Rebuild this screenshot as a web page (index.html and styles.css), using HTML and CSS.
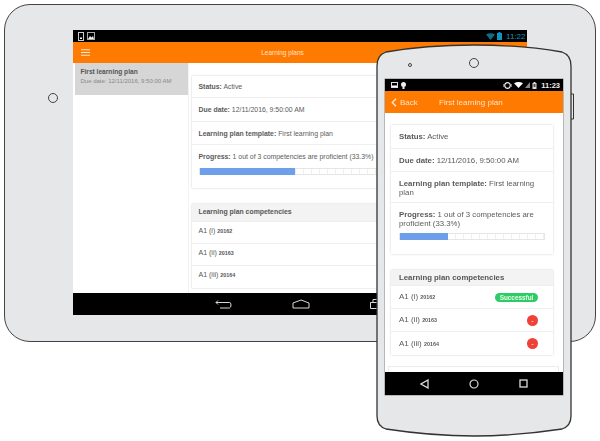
FILE: index.html
```html
<!DOCTYPE html>
<html lang="en">
<head>
<meta charset="utf-8">
<title>Learning plans</title>
<link rel="stylesheet" href="styles.css">
</head>
<body>
<main class="stage">
  <section class="tablet">
    <div class="home-ring"></div>
    <div class="t-screen">
      <div class="t-status">
        <div class="icons">
          <svg width="6" height="9" viewBox="0 0 6 9"><rect x=".5" y=".5" width="5" height="8" fill="none" stroke="#ccc"/><rect x="2" y="5.500" width="2" height="1.500" fill="#fff"/></svg>
          <svg width="8" height="8" viewBox="0 0 8 8"><rect x=".5" y=".5" width="7" height="7" fill="none" stroke="#aaa"/><path d="M1 7l2-3 1.500 1.500L6 4l1 3z" fill="#eee"/></svg>
        </div>
        <div class="icons t-right">
          <svg width="9" height="7" viewBox="0 0 9 7"><path d="M0 1.500Q4.500-1 9 1.500L4.500 7z" fill="#0a6f86"/></svg>
          <svg width="5" height="8" viewBox="0 0 5 8"><rect y="1" width="5" height="7" fill="#1394bc"/><rect x="1.500" width="2" height="1" fill="#1394bc"/></svg>
          <span class="t-clock">11:22</span>
        </div>
      </div>
      <header class="t-bar">
        <svg class="burger" width="9" height="7" viewBox="0 0 9 7"><path d="M0 .750h9M0 3.500h9M0 6.250h9" stroke="#ffe7cf" stroke-width="1"/></svg>
        <span class="t-title">Learning plans</span>
      </header>
      <div class="t-body">
        <aside class="t-side">
          <div class="t-item">
            <strong>First learning plan</strong>
            <span>Due date: 12/11/2016, 9:50:00 AM</span>
          </div>
        </aside>
        <div class="t-main">
          <div class="card t-card">
            <div class="row t-row-a"><b>Status:</b> Active</div>
            <div class="row t-row-b"><b>Due date:</b> 12/11/2016, 9:50:00 AM</div>
            <div class="row t-row-c"><b>Learning plan template:</b> First learning plan</div>
            <div class="row t-row-p">
              <div><b>Progress:</b> 1 out of 3 competencies are proficient (33.3%)</div>
              <div class="bar t-progress"><div class="fill" style="width:31%"></div></div>
            </div>
          </div>
          <div class="card t-card t-comp">
            <div class="card-head t-head">Learning plan competencies</div>
            <div class="row comp t-comp-row">A1 (i) <small>20162</small></div>
            <div class="row comp t-comp-row">A1 (ii) <small>20163</small></div>
            <div class="row comp t-comp-row">A1 (iii) <small>20164</small></div>
          </div>
        </div>
      </div>
      <nav class="t-nav">
        <svg width="17" height="11" viewBox="0 0 17 11"><path d="M3 1.500L1 3.500l2 2M1 3.500h13.500q1.500 0 1.500 2.500t-1.500 3H5" fill="none" stroke="#d8d8d8"/></svg>
        <svg width="18" height="10" viewBox="0 0 18 10"><path d="M1 4L9 1l8 3v5H1z" fill="none" stroke="#d8d8d8"/></svg>
        <svg width="14" height="10" viewBox="0 0 14 10"><path d="M.500 3.500h10v6H.500zM3 3.500V.500h10.500v6h-3" fill="none" stroke="#d8d8d8"/></svg>
      </nav>
    </div>
  </section>

  <section class="phone">
    <svg class="phone-body" width="199" height="393" viewBox="0 0 199 393">
      <path d="M195 50h2.500v25H195" fill="#e6e7e8" stroke="#333"/>
      <path d="M1 22Q1 11 10 8Q50 1 98 1T186 8Q195 11 195 22V372Q195 382 186 385Q140 392 98 392T10 385Q1 382 1 372Z" fill="#e6e7e8" stroke="#333" stroke-width="1.300"/>
    </svg>
    <div class="p-sensors">
      <i class="p-dot"></i>
      <i class="p-cam"></i>
    </div>
    <div class="p-screen">
      <div class="p-status">
        <div class="icons">
          <svg width="7" height="6" viewBox="0 0 7 6"><rect x=".5" y=".5" width="6" height="5" fill="none" stroke="#ddd"/><rect x="1" y="3.500" width="5" height="1.500" fill="#fff"/></svg>
          <svg width="5" height="7" viewBox="0 0 5 7"><circle cx="2.500" cy="2.500" r="2.500" fill="#eee"/><rect x="1.500" y="4.500" width="2" height="2.500" fill="#eee"/></svg>
        </div>
        <div class="icons p-right">
          <svg width="9" height="7" viewBox="0 0 9 7"><circle cx="4.500" cy="3.500" r="2.800" fill="none" stroke="#eee" stroke-width="1.200"/><path d="M0 2v3M9 2v3" stroke="#eee"/></svg>
          <svg width="9" height="6" viewBox="0 0 9 6"><path d="M0 1.200Q4.500-1 9 1.200L4.500 6z" fill="#fff"/></svg>
          <svg width="5" height="6" viewBox="0 0 5 6"><path d="M5 0v6H0z" fill="#888"/></svg>
          <svg width="5" height="7" viewBox="0 0 5 7"><rect x=".5" y="1" width="4" height="6" fill="#ddd"/><rect x="1.500" y="0" width="2" height="1" fill="#ddd"/><rect x="1.500" y="2" width="2" height="3" fill="#555"/></svg>
          <span class="p-clock">11:23</span>
        </div>
      </div>
      <header class="p-bar">
        <span class="p-back">
          <svg width="6" height="9" viewBox="0 0 6 9"><path d="M5 .8L1.300 4.500 5 8.200" fill="none" stroke="#ffe3c8" stroke-width="1.500"/></svg>
          Back
        </span>
        <span class="p-title">First learning plan</span>
      </header>
      <div class="p-body">
        <div class="card p-card">
          <div class="row p-row-a"><b>Status:</b> Active</div>
          <div class="row p-row-b"><b>Due date:</b> 12/11/2016, 9:50:00 AM</div>
          <div class="row p-row-c"><b>Learning plan template:</b> First learning plan</div>
          <div class="row p-row-p">
            <div><b>Progress:</b> 1 out of 3 competencies are proficient (33.3%)</div>
            <div class="bar p-progress"><div class="fill" style="width:33%"></div></div>
          </div>
        </div>
        <div class="card p-card p-comp">
          <div class="card-head p-head">Learning plan competencies</div>
          <div class="row comp p-comp-row"><span>A1 (i) <small>20162</small></span><em class="pill">Successful</em></div>
          <div class="row comp p-comp-row"><span>A1 (ii) <small>20163</small></span><em class="dot">-</em></div>
          <div class="row comp p-comp-row"><span>A1 (iii) <small>20164</small></span><em class="dot">-</em></div>
        </div>
        <div class="p-peek"></div>
      </div>
      <nav class="p-nav">
        <svg width="9" height="10" viewBox="0 0 9 10"><path d="M8 1v8L1 5z" fill="none" stroke="#ddd" stroke-width="1.300"/></svg>
        <svg width="10" height="10" viewBox="0 0 10 10"><circle cx="5" cy="5" r="4" fill="none" stroke="#ddd" stroke-width="1.200"/></svg>
        <svg width="9" height="9" viewBox="0 0 9 9"><rect x="1" y="1" width="7" height="7" fill="none" stroke="#ddd" stroke-width="1.300"/></svg>
      </nav>
    </div>
  </section>
</main>
</body>
</html>
```
FILE: styles.css
```css
* { box-sizing: border-box; }
html, body { margin: 0; background: #fff; }
body { font-family: "Liberation Sans", Arial, sans-serif; color: #5a5a5a; overflow: hidden; }
.stage { position: relative; width: 600px; height: 441px; overflow: hidden; filter: blur(.45px); }
svg { display: block; }
b { font-weight: 700; }
em { font-style: normal; }

/* devices sit on a free canvas */
.tablet {
  position: absolute; left: 4px; top: 4px; width: 592px; height: 338px;
  background: #e6e7e8; border: 1.500px solid #444; border-radius: 26px;
  padding: 25px 68px 25px 67.500px;
  display: flex; align-items: flex-start;
}
.home-ring {
  position: absolute; left: 42.500px; top: 88px; width: 10px; height: 10px;
  border: 1px solid #444; border-radius: 50%;
}
.t-screen { width: 454px; height: 285px; display: flex; flex-direction: column; background: #fff; }
.t-status { height: 12px; background: #000; display: flex; justify-content: space-between; align-items: center; padding: 0 1px 0 5px; }
.icons { display: flex; align-items: center; gap: 3px; }
.t-right { gap: 2px; }
.t-clock { font-size: 8px; color: #1394bc; margin-left: 2px; }
.t-bar { height: 21px; background: #ff7a00; position: relative; display: flex; align-items: center; justify-content: center; color: #ffe3c8; font-size: 6.500px; padding-right: 34px; }
.burger { position: absolute; left: 8px; top: 7px; }
.t-body { flex: 1; display: flex; min-height: 0; overflow: hidden; }
.t-side { width: 116px; padding-left: 2px; border-right: 1px solid #f2f2f2; flex: none; }
.t-item { height: 32px; background: #d6d6d6; padding: 5px 6px; display: flex; flex-direction: column; gap: 2px; }
.t-item strong { font-size: 6.600px; color: #555; font-weight: 700; line-height: 8px; }
.t-item span { font-size: 6px; color: #888; line-height: 7px; }
.t-main { flex: 1; padding: 13px 11px 0 3px; min-width: 0; opacity: .99; }

.card { background: #fff; box-shadow: 0 0 2px rgba(0,0,0,.2); }
.row { border-bottom: 1px solid #eee; }
.t-card { font-size: 6.900px; line-height: 9px; }
.t-card .row { padding: 0 7px; }
.t-row-a { height: 22px; padding-top: 6px !important; }
.t-row-b { height: 24px; padding-top: 7px !important; }
.t-row-c { height: 23px; padding-top: 7px !important; }
.t-row-p { height: 43px; padding-top: 7px !important; border-bottom: 0 !important; }
.bar { display: flex; border: 1px solid #e6e6e6; background: repeating-linear-gradient(90deg, #fff 0, #fff 7px, #efefef 7px, #efefef 8px); }
.fill { background: #6c9eea; margin: -1px 0; }
.t-progress { width: 309px; height: 7px; margin-top: 7px; }
.t-comp { margin-top: 16px; }
.card-head { background: #f3f3f3; font-weight: 700; color: #555; border-bottom: 1px solid #eee; }
.t-head { height: 18px; padding: 3px 7px; line-height: 9px; font-size: 6.900px; }
.t-comp-row { height: 22px; padding-top: 4px !important; color: #555; font-size: 7px; }
.t-comp-row:last-child { border-bottom: 0; }
.comp small { font-size: 5.400px; font-weight: 700; }
.t-nav { height: 22px; background: #000; display: flex; align-items: center; padding-left: 142px; gap: 60px; flex: none; }

.phone { position: absolute; left: 376px; top: 44px; width: 199px; height: 393px; padding: 35px 9px 0; }
.phone-body { position: absolute; inset: 0; }
.p-sensors { position: absolute; left: 0; top: 0; }
.p-dot { position: absolute; left: 32px; top: 19px; width: 4px; height: 4px; border: 1px solid #444; border-radius: 50%; }
.p-cam { position: absolute; left: 93px; top: 14px; width: 10px; height: 10px; border: 1px solid #444; border-radius: 50%; }
.p-screen { position: relative; width: 178px; height: 316px; background: #fff; display: flex; flex-direction: column; box-shadow: 0 0 0 .5px #888; }
.p-status { height: 12px; background: #000; display: flex; justify-content: space-between; align-items: center; padding: 0 3px 0 6px; flex: none; }
.p-right { gap: 2px; }
.p-clock { font-size: 7.500px; font-weight: 700; color: #eee; margin-left: 2px; }
.p-bar { height: 22px; background: #ff7a00; color: #ffe3c8; font-size: 8px; display: flex; align-items: center; padding-left: 6px; flex: none; }
.p-back { display: flex; align-items: center; gap: 3px; width: 48px; }
.p-body { flex: 1; padding: 12px 10px 0 6px; min-height: 0; overflow: hidden; position: relative; }
.p-card { font-size: 7.800px; line-height: 9px; width: 162px; }
.p-card .row { padding: 0 8px; }
.p-row-a { height: 24px; padding-top: 7px !important; }
.p-row-b { height: 23px; padding-top: 7px !important; }
.p-row-c { height: 31px; padding-top: 7px !important; }
.p-row-p { height: 51px; padding-top: 7px !important; border-bottom: 0 !important; }
.p-progress { width: 146px; height: 7px; margin-top: 5px; }
.p-comp { margin-top: 16px; }
.p-head { height: 16px; padding: 3px 8px; line-height: 9px; font-size: 7.800px; }
.p-card .p-comp-row { height: 23px; display: flex; justify-content: space-between; align-items: center; padding: 0 15px 0 8px; font-size: 8px; }
.p-card .p-comp-row:last-child { border-bottom: 0; }
.pill { width: 43px; height: 9px; border-radius: 5px; background: #2fcc66; color: #e8ffe9; font-size: 6.400px; font-weight: 700; line-height: 9px; text-align: center; }
.dot { width: 11px; height: 11px; border-radius: 50%; background: #ef4136; color: #fff; font-size: 7px; line-height: 11px; text-align: center; }
.p-peek { position: absolute; left: 3px; right: 4px; bottom: 0; height: 6px; border: 1px solid #ececec; border-bottom: 0; }
.p-nav { height: 23px; background: #000; display: flex; align-items: center; padding-left: 35px; gap: 40px; flex: none; }
```
